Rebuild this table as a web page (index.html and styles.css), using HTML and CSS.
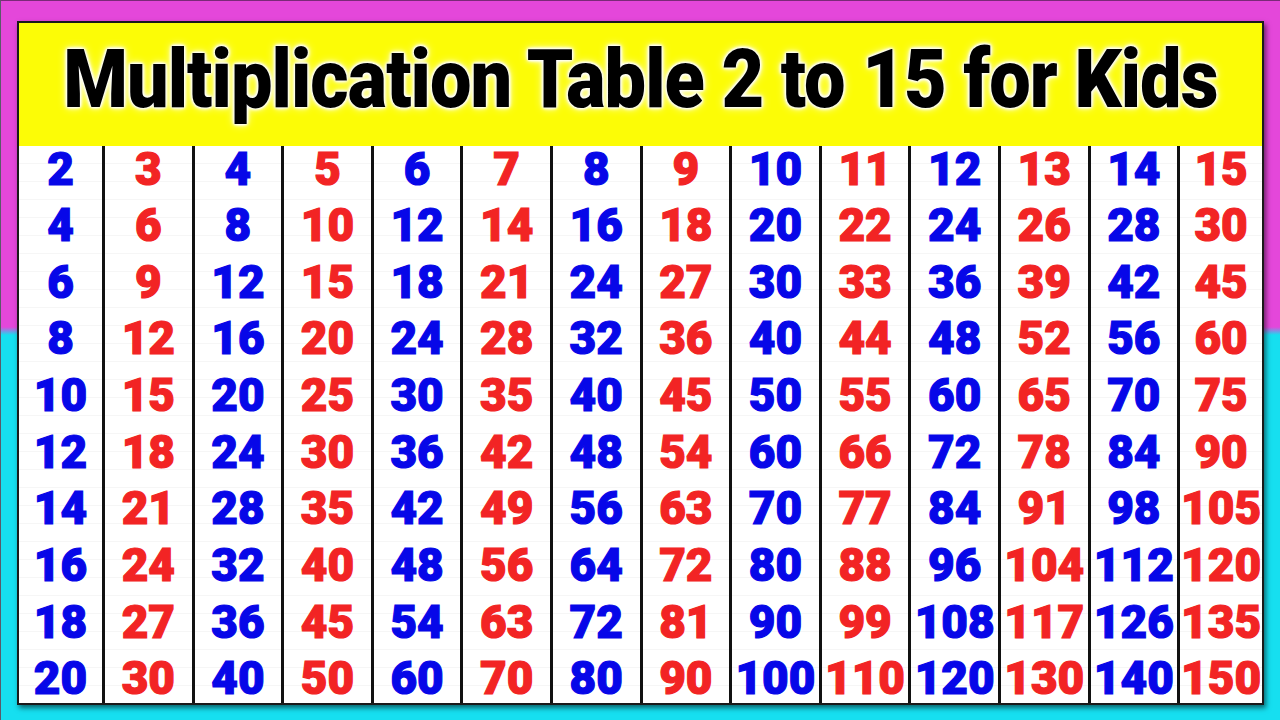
FILE: index.html
```html
<!DOCTYPE html>
<html lang="en">
<head>
<meta charset="utf-8">
<title>Multiplication Table 2 to 15 for Kids</title>
<link rel="stylesheet" href="styles.css">
</head>
<body>
<div class="page">
  <div class="panel">
    <header class="header">
      <h1 class="title">Multiplication Table 2 to 15 for Kids</h1>
    </header>
    <div class="table" id="table"></div>
  </div>
</div>
<script src="app.js"></script>
</body>
</html>
```
FILE: styles.css
```css
html, body {
  margin: 0;
  padding: 0;
}
body {
  width: 1280px;
  height: 720px;
  overflow: hidden;
  font-family: "Roboto", "Liberation Sans", sans-serif;
}
.page {
  width: 1280px;
  height: 720px;
  box-sizing: border-box;
  padding: 22px 18px 18px 18px;
  background: linear-gradient(to bottom, #e447da 0, #e447da 326px, #16dff0 334px, #16dff0 100%);
  border-top: 1px solid #7a2a78;
  border-left: 1px solid #5a5a6a;
}
.panel {
  height: 680px;
  display: flex;
  flex-direction: column;
  background: #fff;
  box-shadow: 0 0 0 2px #1a1a1a, 2px 3px 5px 2px rgba(0,0,0,0.55);
}
.header {
  height: 123px;
  background: #fcfc06;
  display: flex;
  align-items: center;
  justify-content: center;
  padding-bottom: 12px;
  box-sizing: border-box;
}
.title {
  margin: 0;
  font-family: "Roboto", sans-serif;
  font-weight: 900;
  font-size: 82px;
  line-height: 1;
  color: #000;
  white-space: nowrap;
  letter-spacing: -1px;
  transform: scaleX(0.9);
  text-shadow: 0 0 3px #fff, 0 0 3px #fff, 0 0 4px #fff, 0 0 6px #fff, 0 0 10px rgba(255,255,255,0.9);
}
.table {
  flex: 1;
  display: grid;
  grid-template-columns: 83px repeat(12, 89.6px) 1fr;
}
.col {
  display: flex;
  flex-direction: column;
  justify-content: space-between;
  align-items: center;
  padding: 2px 0 4px 0;
  border-left: 3px solid #111;
  background: repeating-linear-gradient(to bottom, transparent 0, transparent 17px, rgba(0,0,0,0.035) 17px, rgba(0,0,0,0.035) 18px);
}
.col:first-child {
  border-left: none;
}
.num {
  height: 41px;
  display: flex;
  align-items: center;
  justify-content: center;
  font-family: "Roboto", sans-serif;
  font-weight: 900;
  font-size: 46px;
  line-height: 1;
  letter-spacing: 0;
  -webkit-text-stroke: 1.2px currentColor;
}
.blue { color: #0707e8; }
.red { color: #f22424; }
```
FILE: app.js
```js
const table = document.getElementById('table');
for (let n = 2; n <= 15; n++) {
  const col = document.createElement('div');
  col.className = 'col ' + (n % 2 === 0 ? 'blue' : 'red');
  for (let k = 1; k <= 10; k++) {
    const cell = document.createElement('div');
    cell.className = 'num';
    cell.textContent = String(n * k);
    col.appendChild(cell);
  }
  table.appendChild(col);
}
```
